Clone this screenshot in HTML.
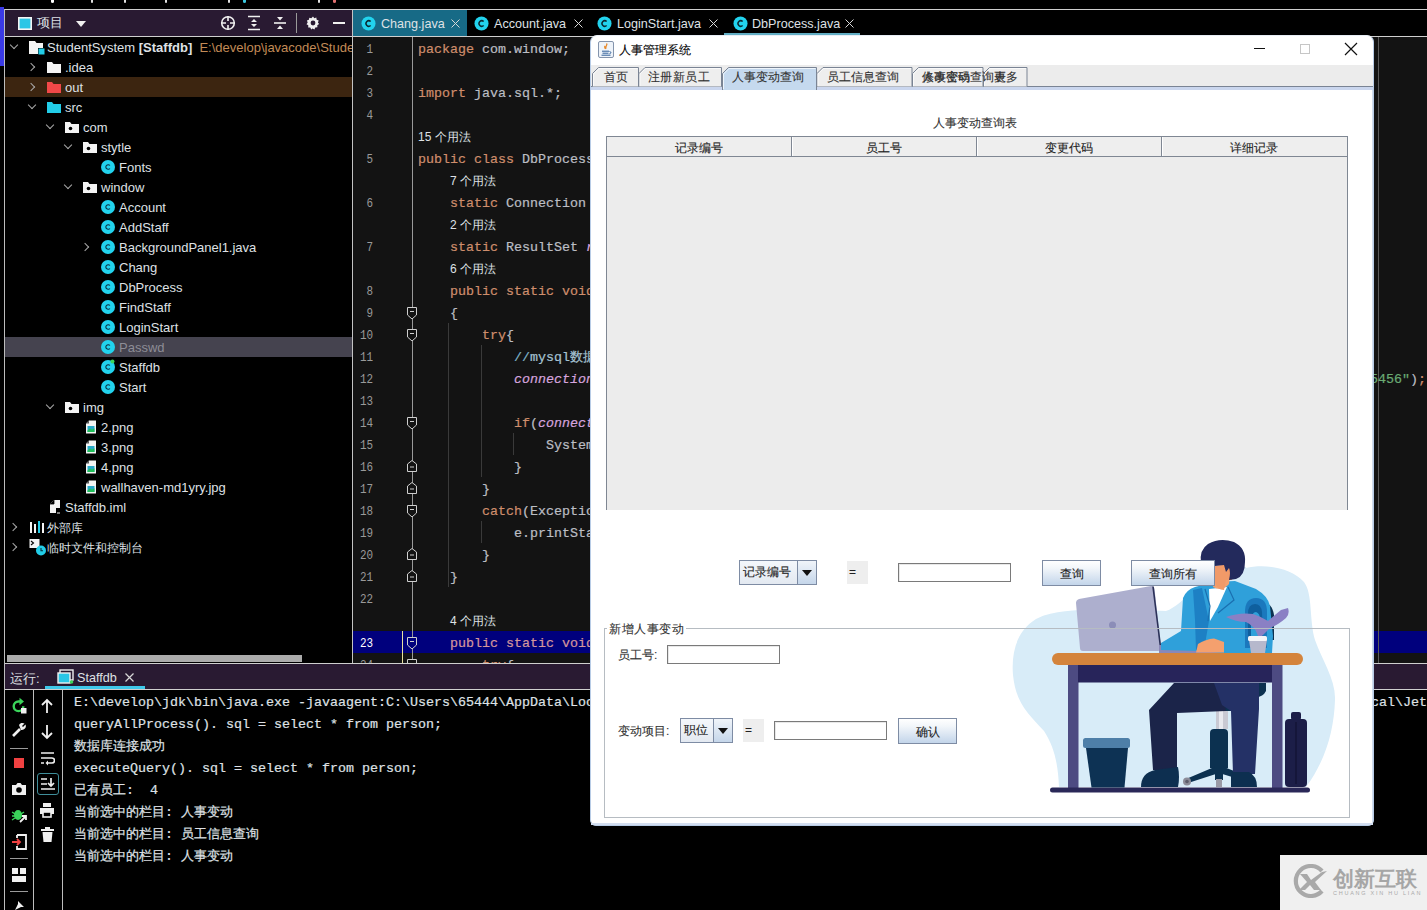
<!DOCTYPE html>
<html><head><meta charset="utf-8"><style>
*{box-sizing:border-box}
html,body{margin:0;padding:0}
body{width:1427px;height:910px;background:#000;position:relative;overflow:hidden;font-family:"Liberation Sans",sans-serif;font-size:13px;color:#dfe1e5}
.a{position:absolute}
.tr{position:absolute;height:20px;line-height:20px;white-space:nowrap;color:#dfe1e5;font-size:13px}
.chev{position:absolute;width:6px;height:6px;border-right:1.4px solid #a8a8a8;border-bottom:1.4px solid #a8a8a8}
.code{position:absolute;left:418px;white-space:pre;font-family:"Liberation Mono",monospace;font-size:13.33px;line-height:22px;height:22px;color:#bcbec4;padding-top:1.5px;-webkit-text-stroke:0.2px}
.num{position:absolute;width:40px;left:333px;text-align:right;font-family:"Liberation Mono",monospace;font-size:13.33px;line-height:22px;color:#8c8c8c;padding-top:1.5px;transform:scaleX(0.82);transform-origin:100% 50%}
.hint{position:absolute;white-space:pre;font-size:12px;line-height:22px;color:#dfe1e5;padding-top:1px}
.con{position:absolute;left:74px;white-space:pre;font-family:"Liberation Mono",monospace;font-size:13.33px;line-height:22px;color:#dfe1e5;-webkit-text-stroke:0.2px}
.st{position:absolute;white-space:nowrap;font-size:12px;line-height:16px;color:#333;-webkit-text-stroke:0.1px}
.tab{position:absolute;white-space:nowrap;font-size:12.6px;line-height:26px;top:11px;color:#dfe1e5}
</style></head><body>
<div class="a" style="left:51px;top:0;width:3px;height:3px;background:#ffffff;border-radius:0 0 2px 2px"></div><div class="a" style="left:91px;top:0;width:1.5px;height:3px;background:#e0e0e0;border-radius:0 0 2px 2px"></div><div class="a" style="left:124px;top:0;width:1.5px;height:3px;background:#e0e0e0;border-radius:0 0 2px 2px"></div><div class="a" style="left:165px;top:0;width:1.5px;height:3px;background:#e0e0e0;border-radius:0 0 2px 2px"></div><div class="a" style="left:228px;top:0;width:1.5px;height:3px;background:#e0e0e0;border-radius:0 0 2px 2px"></div><div class="a" style="left:243px;top:0;width:2.5px;height:3px;background:#3cc8e0;border-radius:0 0 2px 2px"></div><div class="a" style="left:318px;top:0;width:1.5px;height:3px;background:#e0e0e0;border-radius:0 0 2px 2px"></div><div class="a" style="left:333px;top:0;width:2.5px;height:3px;background:#e07070;border-radius:0 0 2px 2px"></div>
<div class="a" style="left:0;top:9px;width:1427px;height:1px;background:#cfcfcf"></div>
<div class="a" style="left:0;top:7px;width:4px;height:59px;background:#3a3ae6"></div>
<div class="a" style="left:4px;top:9px;width:1px;height:901px;background:#bdbdbd"></div>
<div class="a" style="left:5px;top:10px;width:347px;height:26px;background:#291a32"></div>
<div class="a" style="left:5px;top:36px;width:347px;height:1px;background:#cfcfcf"></div>
<svg class="a" style="left:18px;top:17px" width="14" height="13"><rect x="0.8" y="0.8" width="12.4" height="11.4" fill="#2bc6e6" stroke="#f4f4f4" stroke-width="1.6"/></svg>
<div class="tab" style="left:37px;top:10px;font-size:13px">项目</div>
<svg class="a" style="left:76px;top:21px" width="10" height="6"><path d="M0 0h10L5 6z" fill="#f0f0f0"/></svg>
<svg class="a" style="left:220px;top:15px" width="16" height="16" viewBox="0 0 16 16"><circle cx="8" cy="8" r="6.3" fill="none" stroke="#f0f0f0" stroke-width="1.6"/><path d="M8 1v5M8 10v5M1 8h5M10 8h5" stroke="#f0f0f0" stroke-width="1.6"/></svg>
<svg class="a" style="left:247px;top:15px" width="14" height="16" viewBox="0 0 14 16"><path d="M1 1.5h12M1 14.5h12" stroke="#f0f0f0" stroke-width="1.6"/><path d="M7 4l3 3H4z M7 12l3-3H4z" fill="#f0f0f0"/></svg>
<svg class="a" style="left:273px;top:15px" width="14" height="16" viewBox="0 0 14 16"><path d="M1 8h12" stroke="#f0f0f0" stroke-width="1.6"/><path d="M4 2h6L7 5.5z M4 14h6L7 10.5z" fill="#f0f0f0"/></svg>
<div class="a" style="left:296px;top:13px;width:1px;height:20px;background:#9a9a9a"></div>
<svg class="a" style="left:305px;top:15px" width="16" height="16" viewBox="0 0 16 16"><path d="M8 1.5l1.3 1.7 2-.6.4 2.1 2 .8-.8 2 1.2 1.6-1.8 1.1.1 2.1-2.1.2-.9 1.9-1.9-.9L6.2 14.5l-.9-1.9-2.1-.2.1-2.1L1.5 9.2l1.2-1.6-.8-2 2-.8.4-2.1 2 .6z" fill="#f0f0f0"/><circle cx="8" cy="8" r="2.4" fill="#291a32"/></svg>
<div class="a" style="left:333px;top:22px;width:12px;height:2px;background:#f0f0f0"></div>
<div class="a" style="left:5px;top:77px;width:347px;height:20px;background:#3c2510"></div>
<div class="a" style="left:5px;top:337px;width:347px;height:20px;background:#45434f"></div>
<div class="chev" style="left:11px;top:42px;transform:rotate(45deg)"></div>
<svg class="a" style="left:29px;top:39px" width="16" height="16" viewBox="0 0 16 16"><path d="M0 2h6l1.5 2H14v5H9v6H0z" fill="#f4f4f4"/><rect x="9.5" y="9.5" width="6" height="6" fill="#22cde8"/></svg>
<div class="tr" style="left:47px;top:38px"><span>StudentSystem</span> <b style="font-weight:bold">[Staffdb]</b>&nbsp; <span style="color:#c28b57">E:\develop\javacode\StudentSystem</span></div>
<div class="chev" style="left:28px;top:64px;transform:rotate(-45deg)"></div>
<svg class="a" style="left:46px;top:59px" width="16" height="16" viewBox="0 0 16 16"><path d="M1 3h5l1.5 2H15v9H1z" fill="#f4f4f4"/></svg>
<div class="tr" style="left:65px;top:58px">.idea</div>
<div class="chev" style="left:28px;top:84px;transform:rotate(-45deg)"></div>
<svg class="a" style="left:46px;top:79px" width="16" height="16" viewBox="0 0 16 16"><path d="M1 3h5l1.5 2H15v9H1z" fill="#f04848"/></svg>
<div class="tr" style="left:65px;top:78px">out</div>
<div class="chev" style="left:29px;top:102px;transform:rotate(45deg)"></div>
<svg class="a" style="left:46px;top:99px" width="16" height="16" viewBox="0 0 16 16"><path d="M1 3h5l1.5 2H15v9H1z" fill="#22cde8"/></svg>
<div class="tr" style="left:65px;top:98px">src</div>
<div class="chev" style="left:47px;top:122px;transform:rotate(45deg)"></div>
<svg class="a" style="left:64px;top:119px" width="16" height="16" viewBox="0 0 16 16"><path d="M1 3h5l1.5 2H15v9H1z" fill="#f4f4f4"/><circle cx="6.5" cy="9.5" r="1.8" fill="#000"/></svg>
<div class="tr" style="left:83px;top:118px">com</div>
<div class="chev" style="left:65px;top:142px;transform:rotate(45deg)"></div>
<svg class="a" style="left:82px;top:139px" width="16" height="16" viewBox="0 0 16 16"><path d="M1 3h5l1.5 2H15v9H1z" fill="#f4f4f4"/><circle cx="6.5" cy="9.5" r="1.8" fill="#000"/></svg>
<div class="tr" style="left:101px;top:138px">stytle</div>
<svg class="a" style="left:100px;top:159px" width="16" height="16" viewBox="0 0 16 16"><circle cx="8" cy="8" r="7" fill="#22d3ee"/><path d="M9.9 6.5 A2.3 2.3 0 1 0 9.9 9.5" fill="none" stroke="#0a3040" stroke-width="1.1"/></svg>
<div class="tr" style="left:119px;top:158px">Fonts</div>
<div class="chev" style="left:65px;top:182px;transform:rotate(45deg)"></div>
<svg class="a" style="left:82px;top:179px" width="16" height="16" viewBox="0 0 16 16"><path d="M1 3h5l1.5 2H15v9H1z" fill="#f4f4f4"/><circle cx="6.5" cy="9.5" r="1.8" fill="#000"/></svg>
<div class="tr" style="left:101px;top:178px">window</div>
<svg class="a" style="left:100px;top:199px" width="16" height="16" viewBox="0 0 16 16"><circle cx="8" cy="8" r="7" fill="#22d3ee"/><path d="M9.9 6.5 A2.3 2.3 0 1 0 9.9 9.5" fill="none" stroke="#0a3040" stroke-width="1.1"/></svg>
<div class="tr" style="left:119px;top:198px">Account</div>
<svg class="a" style="left:100px;top:219px" width="16" height="16" viewBox="0 0 16 16"><circle cx="8" cy="8" r="7" fill="#22d3ee"/><path d="M9.9 6.5 A2.3 2.3 0 1 0 9.9 9.5" fill="none" stroke="#0a3040" stroke-width="1.1"/></svg>
<div class="tr" style="left:119px;top:218px">AddStaff</div>
<div class="chev" style="left:82px;top:244px;transform:rotate(-45deg)"></div>
<svg class="a" style="left:100px;top:239px" width="16" height="16" viewBox="0 0 16 16"><circle cx="8" cy="8" r="7" fill="#22d3ee"/><path d="M9.9 6.5 A2.3 2.3 0 1 0 9.9 9.5" fill="none" stroke="#0a3040" stroke-width="1.1"/></svg>
<div class="tr" style="left:119px;top:238px">BackgroundPanel1.java</div>
<svg class="a" style="left:100px;top:259px" width="16" height="16" viewBox="0 0 16 16"><circle cx="8" cy="8" r="7" fill="#22d3ee"/><path d="M9.9 6.5 A2.3 2.3 0 1 0 9.9 9.5" fill="none" stroke="#0a3040" stroke-width="1.1"/></svg>
<div class="tr" style="left:119px;top:258px">Chang</div>
<svg class="a" style="left:100px;top:279px" width="16" height="16" viewBox="0 0 16 16"><circle cx="8" cy="8" r="7" fill="#22d3ee"/><path d="M9.9 6.5 A2.3 2.3 0 1 0 9.9 9.5" fill="none" stroke="#0a3040" stroke-width="1.1"/></svg>
<div class="tr" style="left:119px;top:278px">DbProcess</div>
<svg class="a" style="left:100px;top:299px" width="16" height="16" viewBox="0 0 16 16"><circle cx="8" cy="8" r="7" fill="#22d3ee"/><path d="M9.9 6.5 A2.3 2.3 0 1 0 9.9 9.5" fill="none" stroke="#0a3040" stroke-width="1.1"/></svg>
<div class="tr" style="left:119px;top:298px">FindStaff</div>
<svg class="a" style="left:100px;top:319px" width="16" height="16" viewBox="0 0 16 16"><circle cx="8" cy="8" r="7" fill="#22d3ee"/><path d="M9.9 6.5 A2.3 2.3 0 1 0 9.9 9.5" fill="none" stroke="#0a3040" stroke-width="1.1"/></svg>
<div class="tr" style="left:119px;top:318px">LoginStart</div>
<svg class="a" style="left:100px;top:339px" width="16" height="16" viewBox="0 0 16 16"><circle cx="8" cy="8" r="7" fill="#22d3ee"/><path d="M9.9 6.5 A2.3 2.3 0 1 0 9.9 9.5" fill="none" stroke="#0a3040" stroke-width="1.1"/></svg>
<div class="tr" style="left:119px;top:338px"><span style="color:#8d8d96">Passwd</span></div>
<svg class="a" style="left:100px;top:359px" width="16" height="16" viewBox="0 0 16 16"><circle cx="8" cy="8" r="7" fill="#22d3ee"/><path d="M9.9 6.5 A2.3 2.3 0 1 0 9.9 9.5" fill="none" stroke="#0a3040" stroke-width="1.1"/><circle cx="12.5" cy="2.5" r="2" fill="#3ad45a"/></svg>
<div class="tr" style="left:119px;top:358px">Staffdb</div>
<svg class="a" style="left:100px;top:379px" width="16" height="16" viewBox="0 0 16 16"><circle cx="8" cy="8" r="7" fill="#22d3ee"/><path d="M9.9 6.5 A2.3 2.3 0 1 0 9.9 9.5" fill="none" stroke="#0a3040" stroke-width="1.1"/></svg>
<div class="tr" style="left:119px;top:378px">Start</div>
<div class="chev" style="left:47px;top:402px;transform:rotate(45deg)"></div>
<svg class="a" style="left:64px;top:399px" width="16" height="16" viewBox="0 0 16 16"><path d="M1 3h5l1.5 2H15v9H1z" fill="#f4f4f4"/><circle cx="6.5" cy="9.5" r="1.8" fill="#000"/></svg>
<div class="tr" style="left:83px;top:398px">img</div>
<svg class="a" style="left:83px;top:419px" width="16" height="16" viewBox="0 0 16 16"><path d="M6 1.5h7v13H3V4.5z" fill="#f4f4f4"/><path d="M3 4.5h3v-3" fill="#555"/><rect x="4.5" y="7" width="7" height="6" fill="#2aa8c8"/><path d="M4.5 11.5l2.5-2 2 1.2 2.5-1.5v3.8h-7z" fill="#22c05a"/></svg>
<div class="tr" style="left:101px;top:418px">2.png</div>
<svg class="a" style="left:83px;top:439px" width="16" height="16" viewBox="0 0 16 16"><path d="M6 1.5h7v13H3V4.5z" fill="#f4f4f4"/><path d="M3 4.5h3v-3" fill="#555"/><rect x="4.5" y="7" width="7" height="6" fill="#2aa8c8"/><path d="M4.5 11.5l2.5-2 2 1.2 2.5-1.5v3.8h-7z" fill="#22c05a"/></svg>
<div class="tr" style="left:101px;top:438px">3.png</div>
<svg class="a" style="left:83px;top:459px" width="16" height="16" viewBox="0 0 16 16"><path d="M6 1.5h7v13H3V4.5z" fill="#f4f4f4"/><path d="M3 4.5h3v-3" fill="#555"/><rect x="4.5" y="7" width="7" height="6" fill="#2aa8c8"/><path d="M4.5 11.5l2.5-2 2 1.2 2.5-1.5v3.8h-7z" fill="#22c05a"/></svg>
<div class="tr" style="left:101px;top:458px">4.png</div>
<svg class="a" style="left:83px;top:479px" width="16" height="16" viewBox="0 0 16 16"><path d="M6 1.5h7v13H3V4.5z" fill="#f4f4f4"/><path d="M3 4.5h3v-3" fill="#555"/><rect x="4.5" y="7" width="7" height="6" fill="#2aa8c8"/><path d="M4.5 11.5l2.5-2 2 1.2 2.5-1.5v3.8h-7z" fill="#22c05a"/></svg>
<div class="tr" style="left:101px;top:478px">wallhaven-md1yry.jpg</div>
<svg class="a" style="left:47px;top:499px" width="16" height="16" viewBox="0 0 16 16"><path d="M7 1h6v13H3V5z" fill="#f4f4f4"/><path d="M3 5h4V1" fill="#000" stroke="#000" stroke-width="0.8"/><rect x="9" y="9" width="4" height="5" fill="#000"/><rect x="10" y="13.5" width="3" height="1" fill="#f4f4f4"/></svg>
<div class="tr" style="left:65px;top:498px">Staffdb.iml</div>
<div class="chev" style="left:10px;top:524px;transform:rotate(-45deg)"></div>
<svg class="a" style="left:29px;top:519px" width="16" height="16" viewBox="0 0 16 16"><rect x="1" y="3" width="2" height="11" fill="#f4f4f4"/><rect x="5" y="5" width="2" height="9" fill="#f4f4f4"/><rect x="9" y="2" width="2" height="12" fill="#22cde8"/><rect x="13" y="4" width="2" height="10" fill="#f4f4f4"/></svg>
<div class="tr" style="left:47px;top:518px"><span style="font-size:12px">外部库</span></div>
<div class="chev" style="left:10px;top:544px;transform:rotate(-45deg)"></div>
<svg class="a" style="left:29px;top:538px" width="18" height="18" viewBox="0 0 18 18"><path d="M0.5 1h10v9h-10z" fill="#f4f4f4"/><path d="M2 3l2.5 2-2.5 2" stroke="#000" fill="none" stroke-width="1.1"/><circle cx="12" cy="12.5" r="5" fill="#22cde8"/><path d="M12 10v2.8h2" stroke="#05303a" fill="none" stroke-width="1.1"/></svg>
<div class="tr" style="left:47px;top:538px"><span style="font-size:12px">临时文件和控制台</span></div>
<div class="a" style="left:7px;top:655px;width:295px;height:7px;background:#ababab"></div>
<div class="a" style="left:352px;top:10px;width:1px;height:653px;background:#c4c4c4"></div>
<div class="a" style="left:353px;top:37px;width:1074px;height:626px;background:#131313"></div>
<div class="a" style="left:353px;top:631px;width:1074px;height:22px;background:#00007d"></div>
<div class="a" style="left:412px;top:37px;width:1px;height:626px;background:#9a9a9a"></div>
<div class="a" style="left:402px;top:631px;width:1px;height:32px;background:#e8e0a0"></div>
<div class="a" style="left:1378px;top:37px;width:1px;height:626px;background:#5a5a5a"></div>
<div class="a" style="left:448px;top:323px;width:1px;height:264px;background:#3a3a3a"></div>
<div class="a" style="left:481px;top:345px;width:1px;height:132px;background:#3a3a3a"></div>
<div class="a" style="left:481px;top:521px;width:1px;height:22px;background:#3a3a3a"></div>
<div class="a" style="left:513px;top:433px;width:1px;height:22px;background:#3a3a3a"></div>
<svg class="a" style="left:407px;top:307px" width="10" height="12" viewBox="0 0 10 12"><path d="M0.5 0.5h9v7.5l-4.5 4L0.5 8z" fill="#131313" stroke="#cfcfcf" stroke-width="1"/><path d="M3 4.5h4" stroke="#cfcfcf" stroke-width="1"/></svg>
<svg class="a" style="left:407px;top:329px" width="10" height="12" viewBox="0 0 10 12"><path d="M0.5 0.5h9v7.5l-4.5 4L0.5 8z" fill="#131313" stroke="#cfcfcf" stroke-width="1"/><path d="M3 4.5h4" stroke="#cfcfcf" stroke-width="1"/></svg>
<svg class="a" style="left:407px;top:417px" width="10" height="12" viewBox="0 0 10 12"><path d="M0.5 0.5h9v7.5l-4.5 4L0.5 8z" fill="#131313" stroke="#cfcfcf" stroke-width="1"/><path d="M3 4.5h4" stroke="#cfcfcf" stroke-width="1"/></svg>
<svg class="a" style="left:407px;top:460px" width="10" height="12" viewBox="0 0 10 12"><path d="M0.5 11.5h9v-7.5l-4.5-3.5L0.5 4z" fill="#131313" stroke="#cfcfcf" stroke-width="1"/><path d="M3 7h4" stroke="#cfcfcf" stroke-width="1"/></svg>
<svg class="a" style="left:407px;top:482px" width="10" height="12" viewBox="0 0 10 12"><path d="M0.5 11.5h9v-7.5l-4.5-3.5L0.5 4z" fill="#131313" stroke="#cfcfcf" stroke-width="1"/><path d="M3 7h4" stroke="#cfcfcf" stroke-width="1"/></svg>
<svg class="a" style="left:407px;top:505px" width="10" height="12" viewBox="0 0 10 12"><path d="M0.5 0.5h9v7.5l-4.5 4L0.5 8z" fill="#131313" stroke="#cfcfcf" stroke-width="1"/><path d="M3 4.5h4" stroke="#cfcfcf" stroke-width="1"/></svg>
<svg class="a" style="left:407px;top:548px" width="10" height="12" viewBox="0 0 10 12"><path d="M0.5 11.5h9v-7.5l-4.5-3.5L0.5 4z" fill="#131313" stroke="#cfcfcf" stroke-width="1"/><path d="M3 7h4" stroke="#cfcfcf" stroke-width="1"/></svg>
<svg class="a" style="left:407px;top:570px" width="10" height="12" viewBox="0 0 10 12"><path d="M0.5 11.5h9v-7.5l-4.5-3.5L0.5 4z" fill="#131313" stroke="#cfcfcf" stroke-width="1"/><path d="M3 7h4" stroke="#cfcfcf" stroke-width="1"/></svg>
<svg class="a" style="left:407px;top:637px" width="10" height="12" viewBox="0 0 10 12"><path d="M0.5 0.5h9v7.5l-4.5 4L0.5 8z" fill="#00007d" stroke="#cfcfcf" stroke-width="1"/><path d="M3 4.5h4" stroke="#cfcfcf" stroke-width="1"/></svg>
<svg class="a" style="left:407px;top:659px" width="10" height="12" viewBox="0 0 10 12"><path d="M0.5 0.5h9v7.5l-4.5 4L0.5 8z" fill="#131313" stroke="#cfcfcf" stroke-width="1"/><path d="M3 4.5h4" stroke="#cfcfcf" stroke-width="1"/></svg>
<div class="num" style="top:37px;color:#9a9a9a">1</div>
<div class="code" style="top:37px"><span style="color:#cf8e6d">package</span><span style="color:#bcbec4"> com.window;</span></div>
<div class="num" style="top:59px;color:#9a9a9a">2</div>
<div class="num" style="top:81px;color:#9a9a9a">3</div>
<div class="code" style="top:81px"><span style="color:#cf8e6d">import</span><span style="color:#bcbec4"> java.sql.*;</span></div>
<div class="num" style="top:103px;color:#9a9a9a">4</div>
<div class="hint" style="left:418px;top:125px">15 个用法</div>
<div class="num" style="top:147px;color:#9a9a9a">5</div>
<div class="code" style="top:147px"><span style="color:#cf8e6d">public</span><span style="color:#bcbec4"> </span><span style="color:#cf8e6d">class</span><span style="color:#bcbec4"> DbProcess {</span></div>
<div class="hint" style="left:450px;top:169px">7 个用法</div>
<div class="num" style="top:191px;color:#9a9a9a">6</div>
<div class="code" style="top:191px"><span style="color:#cf8e6d">    static</span><span style="color:#bcbec4"> Connection connection;</span></div>
<div class="hint" style="left:450px;top:213px">2 个用法</div>
<div class="num" style="top:235px;color:#9a9a9a">7</div>
<div class="code" style="top:235px"><span style="color:#cf8e6d">    static</span><span style="color:#bcbec4"> ResultSet </span><span style="color:#d6a4de;font-style:italic">rs</span></div>
<div class="hint" style="left:450px;top:257px">6 个用法</div>
<div class="num" style="top:279px;color:#9a9a9a">8</div>
<div class="code" style="top:279px"><span style="color:#cf8e6d">    public static void</span><span style="color:#bcbec4"> connect()</span></div>
<div class="num" style="top:301px;color:#9a9a9a">9</div>
<div class="code" style="top:301px"><span style="color:#bcbec4">    {</span></div>
<div class="num" style="top:323px;color:#9a9a9a">10</div>
<div class="code" style="top:323px"><span style="color:#cf8e6d">        try</span><span style="color:#bcbec4">{</span></div>
<div class="num" style="top:345px;color:#9a9a9a">11</div>
<div class="code" style="top:345px"><span style="color:#7fb3c9">            //</span><span style="color:#a6c3d3">mysql数据库</span></div>
<div class="num" style="top:367px;color:#9a9a9a">12</div>
<div class="code" style="top:367px"><span style="color:#d6a4de;font-style:italic">            connection</span><span style="color:#bcbec4"> = DriverManager.getConnection(</span></div>
<div class="num" style="top:389px;color:#9a9a9a">13</div>
<div class="num" style="top:411px;color:#9a9a9a">14</div>
<div class="code" style="top:411px"><span style="color:#cf8e6d">            if</span><span style="color:#bcbec4">(</span><span style="color:#d6a4de;font-style:italic">connection</span></div>
<div class="num" style="top:433px;color:#9a9a9a">15</div>
<div class="code" style="top:433px"><span style="color:#bcbec4">                System.out.println</span></div>
<div class="num" style="top:455px;color:#9a9a9a">16</div>
<div class="code" style="top:455px"><span style="color:#bcbec4">            }</span></div>
<div class="num" style="top:477px;color:#9a9a9a">17</div>
<div class="code" style="top:477px"><span style="color:#bcbec4">        }</span></div>
<div class="num" style="top:499px;color:#9a9a9a">18</div>
<div class="code" style="top:499px"><span style="color:#cf8e6d">        catch</span><span style="color:#bcbec4">(Exception e)</span></div>
<div class="num" style="top:521px;color:#9a9a9a">19</div>
<div class="code" style="top:521px"><span style="color:#bcbec4">            e.printStackTrace();</span></div>
<div class="num" style="top:543px;color:#9a9a9a">20</div>
<div class="code" style="top:543px"><span style="color:#bcbec4">        }</span></div>
<div class="num" style="top:565px;color:#9a9a9a">21</div>
<div class="code" style="top:565px"><span style="color:#bcbec4">    }</span></div>
<div class="num" style="top:587px;color:#9a9a9a">22</div>
<div class="hint" style="left:450px;top:609px">4 个用法</div>
<div class="num" style="top:631px;color:#ffffff">23</div>
<div class="code" style="top:631px"><span style="color:#d4979c">    public static void</span><span style="color:#bcbec4"> query</span></div>
<div class="num" style="top:653px;color:#9a9a9a">24</div>
<div class="code" style="top:653px"><span style="color:#cf8e6d">        try</span><span style="color:#bcbec4">{</span></div>
<div class="code" style="left:1362px;top:367px"><span style="color:#6aab73">"5456"</span><span style="color:#bcbec4">)</span><span style="color:#cf8e6d">;</span></div>
<div class="a" style="left:353px;top:10px;width:1074px;height:26px;background:#000"></div>
<div class="a" style="left:353px;top:10px;width:114px;height:26px;background:#176a86"></div>
<div class="a" style="left:353px;top:36px;width:1074px;height:1px;background:#cfcfcf"></div>
<div class="a" style="left:724px;top:33px;width:136px;height:2px;background:#62aec4"></div>
<svg class="a" style="left:361px;top:15.5px" width="15" height="15" viewBox="0 0 16 16"><circle cx="8" cy="8" r="7.5" fill="#22d3ee"/><path d="M10.3 5.9 A2.9 2.9 0 1 0 10.3 10.1" fill="none" stroke="#0a2a33" stroke-width="1.6"/></svg><div class="tab" style="left:381px">Chang.java</div><svg class="a" style="left:451px;top:19px" width="9" height="9"><path d="M0.5 0.5L8.5 8.5M8.5 0.5L0.5 8.5" stroke="#d8d8d8" stroke-width="1"/></svg>
<svg class="a" style="left:474px;top:15.5px" width="15" height="15" viewBox="0 0 16 16"><circle cx="8" cy="8" r="7.5" fill="#22d3ee"/><path d="M10.3 5.9 A2.9 2.9 0 1 0 10.3 10.1" fill="none" stroke="#0a2a33" stroke-width="1.6"/></svg><div class="tab" style="left:494px">Account.java</div><svg class="a" style="left:574px;top:19px" width="9" height="9"><path d="M0.5 0.5L8.5 8.5M8.5 0.5L0.5 8.5" stroke="#d8d8d8" stroke-width="1"/></svg>
<svg class="a" style="left:597px;top:15.5px" width="15" height="15" viewBox="0 0 16 16"><circle cx="8" cy="8" r="7.5" fill="#22d3ee"/><path d="M10.3 5.9 A2.9 2.9 0 1 0 10.3 10.1" fill="none" stroke="#0a2a33" stroke-width="1.6"/></svg><div class="tab" style="left:617px">LoginStart.java</div><svg class="a" style="left:709px;top:19px" width="9" height="9"><path d="M0.5 0.5L8.5 8.5M8.5 0.5L0.5 8.5" stroke="#d8d8d8" stroke-width="1"/></svg>
<svg class="a" style="left:733px;top:15.5px" width="15" height="15" viewBox="0 0 16 16"><circle cx="8" cy="8" r="7.5" fill="#22d3ee"/><path d="M10.3 5.9 A2.9 2.9 0 1 0 10.3 10.1" fill="none" stroke="#0a2a33" stroke-width="1.6"/></svg><div class="tab" style="left:752px">DbProcess.java</div><svg class="a" style="left:845px;top:19px" width="9" height="9"><path d="M0.5 0.5L8.5 8.5M8.5 0.5L0.5 8.5" stroke="#d8d8d8" stroke-width="1"/></svg>
<div class="a" style="left:5px;top:663px;width:1422px;height:1px;background:#cfcfcf"></div>
<div class="a" style="left:5px;top:664px;width:1422px;height:25px;background:#291a32"></div>
<div class="a" style="left:45px;top:686px;width:100px;height:3px;background:#3ec9ea"></div>
<div class="a" style="left:5px;top:689px;width:1422px;height:1px;background:#cfcfcf"></div>
<div class="a" style="left:33px;top:690px;width:1px;height:220px;background:#bdbdbd"></div>
<div class="a" style="left:62px;top:690px;width:1px;height:220px;background:#bdbdbd"></div>
<div class="tab" style="left:10px;top:666px;line-height:25px;font-size:13px">运行:</div>
<svg class="a" style="left:57px;top:669px" width="17" height="15" viewBox="0 0 17 15"><rect x="3" y="1" width="13" height="10" fill="none" stroke="#f0f0f0" stroke-width="1.4"/><rect x="1" y="4" width="12" height="10" fill="#2bc6e6" stroke="#f0f0f0" stroke-width="1.4"/><circle cx="14.5" cy="13" r="1.8" fill="#3ad45a"/></svg>
<div class="tab" style="left:77px;top:666px;line-height:25px">Staffdb</div>
<svg class="a" style="left:125px;top:673px" width="9" height="9"><path d="M0.5 0.5L8.5 8.5M8.5 0.5L0.5 8.5" stroke="#d8d8d8" stroke-width="1.2"/></svg>
<svg class="a" style="left:11px;top:697px" width="16" height="17" viewBox="0 0 16 17"><path d="M9 4.5H7.5A4.8 4.8 0 1 0 12.3 9.3" fill="none" stroke="#3ad45a" stroke-width="2.4"/><path d="M8.5 0.8L13 4.5L8.5 8.2z" fill="#3ad45a"/><rect x="10" y="11" width="5.5" height="5.5" fill="#f0f0f0"/></svg>
<svg class="a" style="left:11px;top:722px" width="16" height="16" viewBox="0 0 16 16"><path d="M2 14L9 7" stroke="#f0f0f0" stroke-width="2.6"/><path d="M8 3a4 4 0 0 1 5.5-1.5L11 4l1 1 2.5-2.5A4 4 0 0 1 10 8z" fill="#f0f0f0"/></svg>
<div class="a" style="left:10px;top:748px;width:18px;height:1px;background:#9a9a9a"></div>
<div class="a" style="left:14px;top:758px;width:10px;height:10px;background:#f04141"></div>
<svg class="a" style="left:11px;top:782px" width="16" height="14" viewBox="0 0 16 14"><path d="M1 3h4l1.5-2h3L11 3h4v10H1z" fill="#f0f0f0"/><circle cx="8" cy="8" r="2.8" fill="#000"/></svg>
<svg class="a" style="left:11px;top:807px" width="17" height="17" viewBox="0 0 17 17"><ellipse cx="7" cy="8" rx="4" ry="5" fill="#3ad45a"/><path d="M1 5l3 2M1 9h3M1 13l3-2M13 5l-3 2M13 9h-3" stroke="#3ad45a" stroke-width="1.4"/><path d="M9 15l6-6M11 9h4v4" stroke="#f0f0f0" stroke-width="1.8" fill="none"/></svg>
<svg class="a" style="left:11px;top:834px" width="16" height="16" viewBox="0 0 16 16"><path d="M6 1h9v14H6v-3M6 4V1" fill="none" stroke="#f0f0f0" stroke-width="1.8"/><path d="M1 8h8M6 5l3 3-3 3" fill="none" stroke="#f04141" stroke-width="1.8"/></svg>
<div class="a" style="left:10px;top:858px;width:18px;height:1px;background:#9a9a9a"></div>
<svg class="a" style="left:12px;top:868px" width="14" height="14" viewBox="0 0 14 14"><rect x="0" y="0" width="6" height="6" fill="#f0f0f0"/><rect x="8" y="0" width="6" height="6" fill="#f0f0f0"/><rect x="0" y="8" width="14" height="6" fill="#f0f0f0"/></svg>
<div class="a" style="left:10px;top:891px;width:18px;height:1px;background:#9a9a9a"></div>
<svg class="a" style="left:12px;top:899px" width="14" height="11" viewBox="0 0 14 11"><path d="M6 2l6 6-3 0-6 3 3-6z" fill="#f0f0f0"/></svg>
<svg class="a" style="left:40px;top:698px" width="14" height="16" viewBox="0 0 14 16"><path d="M7 15V2M2 7l5-5 5 5" fill="none" stroke="#f0f0f0" stroke-width="1.8"/></svg>
<svg class="a" style="left:40px;top:724px" width="14" height="16" viewBox="0 0 14 16"><path d="M7 1v13M2 9l5 5 5-5" fill="none" stroke="#f0f0f0" stroke-width="1.8"/></svg>
<svg class="a" style="left:40px;top:751px" width="15" height="15" viewBox="0 0 15 15"><path d="M1 2h13M1 7h11a2.5 2.5 0 0 1 0 5H7M1 12h3" fill="none" stroke="#f0f0f0" stroke-width="1.7"/><path d="M8 9.5l-2.5 2.5 2.5 2.5z" fill="#f0f0f0"/></svg>
<div class="a" style="left:37px;top:773px;width:22px;height:22px;border:1px solid #3f8e9a;border-radius:3px"></div>
<svg class="a" style="left:40px;top:776px" width="16" height="16" viewBox="0 0 16 16"><path d="M1 3h6M1 8h6M1 13h14M11 2v8M8 7l3 3 3-3" fill="none" stroke="#f0f0f0" stroke-width="1.7"/></svg>
<svg class="a" style="left:39px;top:802px" width="16" height="16" viewBox="0 0 16 16"><rect x="4" y="1" width="8" height="4" fill="#f0f0f0"/><rect x="1" y="6" width="14" height="6" fill="#f0f0f0"/><rect x="4" y="10" width="8" height="5" fill="#000" stroke="#f0f0f0" stroke-width="1.6"/></svg>
<svg class="a" style="left:41px;top:827px" width="13" height="15" viewBox="0 0 13 15"><rect x="0" y="2" width="13" height="2" fill="#f0f0f0"/><rect x="4" y="0" width="5" height="2" fill="#f0f0f0"/><path d="M1.5 5h10l-1 10h-8z" fill="#f0f0f0"/></svg>
<div class="con" style="top:692px">E:\develop\jdk\bin\java.exe -javaagent:C:\Users\65444\AppData\Local\Programs\IntelliJ IDEA Ultimate\lib\idea_rt.jar=5</div>
<div class="con" style="top:714px">queryAllProcess(). sql = select * from person;</div>
<div class="con" style="top:736px">数据库连接成功</div>
<div class="con" style="top:758px">executeQuery(). sql = select * from person;</div>
<div class="con" style="top:780px">已有员工:  4</div>
<div class="con" style="top:802px">当前选中的栏目: 人事变动</div>
<div class="con" style="top:824px">当前选中的栏目: 员工信息查询</div>
<div class="con" style="top:846px">当前选中的栏目: 人事变动</div>
<div class="con" style="left:1371px;top:692px">cal\JetBrains</div>
<div class="a" style="left:590px;top:35px;width:784px;height:791px;background:#fff;border:1px solid #b8cce6;border-top-color:#e8eef6;border-radius:7px 7px 6px 6px"></div>
<div class="a" style="left:1372px;top:90px;width:1px;height:733px;background:#d0dcec"></div>
<div class="a" style="left:591px;top:823px;width:782px;height:2px;background:#d3def0"></div>
<svg class="a" style="left:598px;top:41px" width="16" height="17" viewBox="0 0 16 17"><rect x="0.5" y="0.5" width="15" height="16" rx="1.5" fill="#eef3f9" stroke="#8494ac"/><path d="M8.5 2.5c1.8 1.6-2.2 2.8-0.3 5.2M7 5c-1 1.2 0.4 2 0.2 3" stroke="#e8892a" stroke-width="1.3" fill="none"/><path d="M4 10.2h7M4.5 12.2h6M3.5 14.2h9" stroke="#2f5f98" stroke-width="1"/><path d="M11.5 10.5c1.8 0 1.8 2.2 0 2.2" stroke="#2f5f98" fill="none" stroke-width="1"/></svg>
<div class="st" style="left:619px;top:42px;color:#000;font-size:12px">人事管理系统</div>
<div class="a" style="left:1254px;top:48px;width:11px;height:1px;background:#111"></div>
<div class="a" style="left:1300px;top:44px;width:10px;height:10px;border:1px solid #c6c6c6"></div>
<svg class="a" style="left:1344px;top:42px" width="14" height="14"><path d="M1 1L13 13M13 1L1 13" stroke="#111" stroke-width="1.2"/></svg>
<svg class="a" style="left:590px;top:60px" width="784" height="32" viewBox="590 60 784 32">
<rect x="591" y="65" width="782" height="21" fill="#ececec"/>
<rect x="591" y="86" width="782" height="1" fill="#7a8494"/>
<rect x="591" y="87" width="782" height="3" fill="#cad6ee"/>
<path d="M592.5 86.5 V73.5 L598.5 67.5 H638.5 V86.5" fill="#eeeeee" stroke="#7a8494" stroke-width="1"/>
<path d="M593.5 86 V74 L599 68.5 H637.5" fill="none" stroke="#fafafa" stroke-width="1"/>
<path d="M639.0 86.5 V73.5 L645.0 67.5 H721.5 V86.5" fill="#eeeeee" stroke="#7a8494" stroke-width="1"/>
<path d="M640.0 86 V74 L645.5 68.5 H720.5" fill="none" stroke="#fafafa" stroke-width="1"/>
<path d="M722.5 90 V73.5 L728.5 67.5 H816.5 V90" fill="#c5d9ee" stroke="#7a8494" stroke-width="1"/>
<path d="M723.5 89 V74 L729 68.5 H815.5" fill="none" stroke="#eef5fc" stroke-width="1"/>
<path d="M817.0 86.5 V73.5 L823.0 67.5 H912 V86.5" fill="#eeeeee" stroke="#7a8494" stroke-width="1"/>
<path d="M818.0 86 V74 L823.5 68.5 H911" fill="none" stroke="#fafafa" stroke-width="1"/>
<path d="M912.5 86.5 V73.5 L918.5 67.5 H983 V86.5" fill="#eeeeee" stroke="#7a8494" stroke-width="1"/>
<path d="M913.5 86 V74 L919 68.5 H982" fill="none" stroke="#fafafa" stroke-width="1"/>
<path d="M983.5 86.5 V73.5 L989.5 67.5 H1027 V86.5" fill="#eeeeee" stroke="#7a8494" stroke-width="1"/>
<path d="M984.5 86 V74 L990 68.5 H1026" fill="none" stroke="#fafafa" stroke-width="1"/>
</svg>
<div class="st" style="left:604px;top:69px;letter-spacing:0">首页</div>
<div class="st" style="left:648px;top:69px;letter-spacing:0.4px">注册新员工</div>
<div class="st" style="left:732px;top:69px;letter-spacing:0">人事变动查询</div>
<div class="st" style="left:827px;top:69px;letter-spacing:0">员工信息查询</div>
<div class="st" style="left:922px;top:69px;letter-spacing:0">修改密码</div>
<div class="st" style="left:922px;top:69px;letter-spacing:0">人事变动查询表</div>
<div class="st" style="left:994px;top:69px;letter-spacing:0">更多</div>
<div class="st" style="left:933px;top:115px;color:#333">人事变动查询表</div>
<div class="a" style="left:606px;top:136px;width:742px;height:374px;background:#ececec;border-left:1px solid #7f8793;border-right:1px solid #7f8793"></div>
<div class="a" style="left:606px;top:136px;width:742px;height:21px;background:#eeeeee;border:1px solid #7f8793"></div>
<div class="a" style="left:791px;top:137px;width:1px;height:19px;background:#7f8793"></div>
<div class="a" style="left:792px;top:137px;width:1px;height:19px;background:#ffffff"></div>
<div class="a" style="left:976px;top:137px;width:1px;height:19px;background:#7f8793"></div>
<div class="a" style="left:977px;top:137px;width:1px;height:19px;background:#ffffff"></div>
<div class="a" style="left:1161px;top:137px;width:1px;height:19px;background:#7f8793"></div>
<div class="a" style="left:1162px;top:137px;width:1px;height:19px;background:#ffffff"></div>
<div class="st" style="left:639px;width:120px;text-align:center;top:140px;color:#222">记录编号</div>
<div class="st" style="left:824px;width:120px;text-align:center;top:140px;color:#222">员工号</div>
<div class="st" style="left:1009px;width:120px;text-align:center;top:140px;color:#222">变更代码</div>
<div class="st" style="left:1194px;width:120px;text-align:center;top:140px;color:#222">详细记录</div>
<svg class="a" style="left:1000px;top:530px" width="350" height="270" viewBox="1000 530 350 270">
<path d="M1246 568 C1262 564 1290 566 1304 582 C1313 594 1309 620 1315 640 C1322 660 1336 680 1335 700 C1334 730 1326 760 1306 787 L1059 787 C1058 765 1055 748 1044 731 C1030 715 1016 705 1013 675 C1011 650 1018 630 1036 619 C1055 609 1075 612 1095 608 L1166 611 C1175 608 1182 600 1195 590 C1212 578 1228 570 1246 567 Z" fill="#d8ecf8"/>
<path d="M1260 603 q12 -2 14 12 v25 h-14z" fill="#0c3150"/>
<path d="M1252 683 h14 v8 q-3 6 -10 6 h-4z" fill="#0c3150"/>
<rect x="1175" y="702" width="80" height="9" fill="#0c3150"/>
<rect x="1216" y="711" width="12" height="18" fill="#c9c9d3"/>
<rect x="1219" y="711" width="4" height="18" fill="#e9e9ef"/>
<path d="M1210 733 q0 -4 4 -4 h10 q4 0 4 4 v35 h-18z" fill="#0c3150"/>
<path d="M1219 765 L1186 779 L1188 783 L1219 773 L1252 783 L1254 779 Z" fill="#0c3150"/>
<rect x="1215" y="765" width="8" height="15" fill="#0c3150"/>
<circle cx="1187" cy="781.5" r="4" fill="#8c8c98"/><circle cx="1187" cy="781.5" r="1.8" fill="#5c5c6a"/>
<rect x="1216" y="779" width="6" height="8" fill="#9a9aa6"/>
<path d="M1174 683 L1221 683 L1226 711 L1177 713 L1177 770 L1153 770 L1149 710 Z" fill="#1b2449"/>
<path d="M1141 787 q0 -14 14 -17 l23 -3 q2 10 0 20 z" fill="#0d2f50"/>
<path d="M1214 683 L1259 683 L1259 709 L1255 774 L1233 774 L1231 711 L1222 705 Z" fill="#243166"/>
<path d="M1231 787 v-15 h18 q8 4 8 15 z" fill="#0d2f50"/>
<rect x="1068" y="664" width="10.5" height="124" fill="#4d4b82"/>
<rect x="1272" y="664" width="10.5" height="124" fill="#4d4b82"/>
<rect x="1078" y="664" width="194" height="18.5" fill="#27245a"/>
<rect x="1052" y="653" width="251" height="12" rx="6" fill="#d4843c"/>
<rect x="1050" y="787.5" width="260" height="5" rx="2.5" fill="#2a2858"/>
<path d="M1086 748 L1128 748 L1124.5 787.5 L1091.5 787.5 Z" fill="#0d3254"/>
<rect x="1083" y="738" width="47" height="10" rx="2.5" fill="#4e7fa8"/>
<rect x="1291" y="712" width="10" height="8" rx="2" fill="#1c1e48"/>
<rect x="1285" y="719" width="22" height="68" rx="4" fill="#1c1e48"/>
<rect x="1295.5" y="722" width="1" height="62" fill="#0e0f2c"/>
<path d="M1079 599 L1151 586 Q1154 585.5 1154.5 589 L1161 648 Q1161 651 1158 651 L1083 651 Q1080 651 1080 648 L1076 603 Q1076 600 1079 599Z" fill="#adafce"/>
<path d="M1153 586.5 L1161 651" stroke="#2b3158" stroke-width="1.6"/>
<circle cx="1112.5" cy="625" r="3.5" fill="#8b8db8"/>
<path d="M1159 645 L1224 647 L1224 653 L1159 653 Z" fill="#8a88b8"/>
<path d="M1161 643 L1181 631 L1183 598 Q1186 590 1195 587 L1214 582 L1235 581 L1256 589 Q1268 596 1270 606 L1273 636 L1272 653 L1223 653 L1200 651 L1161 650 Z" fill="#2fa0da"/>
<path d="M1193 590 L1202 588 L1209 621 L1204 650 L1196 650 L1195 620 Z" fill="#1d80c4"/>
<path d="M1245 648 V612 Q1245 598 1256 598 Q1267 598 1267 612 V648 Z" fill="#1b78bd"/>
<path d="M1248 640 V614 Q1248 604 1255 604 Q1261 604 1262 612 L1263 640 Z" fill="#0f5f9e"/>
<path d="M1251 648 V620 Q1252 612 1256 612 Q1260 613 1260 620 V648 Z" fill="#2fa0da"/>
<path d="M1209 589 L1227 587 L1218 607 L1210 621 Z" fill="#ffffff"/>
<path d="M1205 589 L1210 606 L1208 621" stroke="#1a6fb0" stroke-width="1.2" fill="none"/>
<path d="M1228 587 L1234 600 L1218 613" stroke="#1a6fb0" stroke-width="1.2" fill="none"/>
<path d="M1214 566 L1231 566 L1229 584 Q1222 592 1213 587 Z" fill="#f4a06e"/>
<path d="M1213 566 L1231 564 L1232 580 L1226 580 L1224 590 Q1217 590 1215 582Z" fill="#f19a68"/>
<path d="M1201 563 Q1199 550 1208 544 Q1220 537 1234 542 Q1246 548 1245 562 Q1245 576 1236 579 L1229 580 Q1231 572 1229 568 L1226 572 L1224 565 L1215 566 Q1205 568 1201 563Z" fill="#232a5c"/>
<path d="M1196 652.6 L1198 644 Q1206 639 1214 638.5 L1224 642 L1224 652.6 Z" fill="#f4a06e"/>
<path d="M1226 617 Q1240 612 1253 614 Q1262 617 1268 621 Q1276 614 1281 610 L1288 608 Q1290 614 1286 618 Q1278 625 1270 628 Q1266 632 1262 636 L1258 636 Q1255 626 1246 622 Q1236 622 1226 617Z" fill="#8a80c4"/>
<path d="M1249 640 h18 l-2 13 h-14z" fill="#b6b8cc"/>
<rect x="1248" y="636" width="19" height="5" rx="1.5" fill="#f4f4f8"/>
</svg>
<div class="a" style="left:739px;top:560px;width:78px;height:25px;border:1px solid #7e8ca4;background:linear-gradient(#f4f7fb,#e3e9f1)"></div><div class="a" style="left:797px;top:561px;width:19px;height:23px;border-left:1px solid #7e8ca4;background:linear-gradient(#f0f4f9,#c5d6ea)"></div><svg class="a" style="left:802.0px;top:569.5px" width="10" height="6"><path d="M0 0h10L5 6z" fill="#111"/></svg><div class="st" style="left:743px;top:560px;height:25px;line-height:25px;color:#222">记录编号</div>
<div class="a" style="left:847px;top:561px;width:21px;height:23px;background:#eeeeee"></div><div class="st" style="left:849px;top:561px;height:23px;line-height:23px;color:#222">=</div>
<div class="a" style="left:898px;top:563px;width:113px;height:19px;border:1px solid #7a7a7a;background:#fff;box-shadow:inset 1px 1px 0 #e8e8e8"></div>
<div class="a" style="left:1042px;top:560px;width:59px;height:26px;border:1px solid #7e8ca4;background:linear-gradient(#ffffff,#f2f6fa 30%,#c3d5ea);"></div><div class="st" style="left:1042px;top:561px;width:59px;height:26px;line-height:26px;text-align:center;color:#222">查询</div>
<div class="a" style="left:1131px;top:560px;width:84px;height:26px;border:1px solid #7e8ca4;background:linear-gradient(#ffffff,#f2f6fa 30%,#c3d5ea);"></div><div class="st" style="left:1131px;top:561px;width:84px;height:26px;line-height:26px;text-align:center;color:#222">查询所有</div>
<div class="a" style="left:604px;top:628px;width:746px;height:190px;border:1px solid #b6bcc2"></div>
<div class="st" style="left:607px;top:621px;padding:0 2px;background:#fff;color:#333;font-size:12px;letter-spacing:0.5px">新增人事变动</div>
<div class="st" style="left:618px;top:647px;color:#333">员工号:</div>
<div class="a" style="left:667px;top:645px;width:113px;height:19px;border:1px solid #7a7a7a;background:#fff;box-shadow:inset 1px 1px 0 #e8e8e8"></div>
<div class="st" style="left:618px;top:723px;color:#333">变动项目:</div>
<div class="a" style="left:680px;top:718px;width:53px;height:25px;border:1px solid #7e8ca4;background:linear-gradient(#f4f7fb,#e3e9f1)"></div><div class="a" style="left:713px;top:719px;width:19px;height:23px;border-left:1px solid #7e8ca4;background:linear-gradient(#f0f4f9,#c5d6ea)"></div><svg class="a" style="left:718.0px;top:727.5px" width="10" height="6"><path d="M0 0h10L5 6z" fill="#111"/></svg><div class="st" style="left:684px;top:718px;height:25px;line-height:25px;color:#222">职位</div>
<div class="a" style="left:743px;top:719px;width:21px;height:23px;background:#eeeeee"></div><div class="st" style="left:745px;top:719px;height:23px;line-height:23px;color:#222">=</div>
<div class="a" style="left:774px;top:721px;width:113px;height:19px;border:1px solid #7a7a7a;background:#fff;box-shadow:inset 1px 1px 0 #e8e8e8"></div>
<div class="a" style="left:898px;top:718px;width:59px;height:26px;border:1px solid #7e8ca4;background:linear-gradient(#ffffff,#f2f6fa 30%,#c3d5ea);"></div><div class="st" style="left:898px;top:719px;width:59px;height:26px;line-height:26px;text-align:center;color:#222">确认</div>
<div class="a" style="left:1280px;top:855px;width:147px;height:55px;background:#f0f0f0"></div><svg class="a" style="left:1291px;top:864px" width="38" height="34" viewBox="0 0 38 34"><path d="M31 7 A15 15 0 1 0 31 27" fill="none" stroke="#a9a9a9" stroke-width="4.2"/><path d="M9 10h7l4 6 11-8 5-1-12 11 6 8h-7l-4-5-5 5h-6l8-8z" fill="#a9a9a9"/></svg><div class="a" style="left:1333px;top:867px;font-size:21px;line-height:24px;color:#a6a6a6;font-weight:bold;white-space:nowrap">创新互联</div><div class="a" style="left:1333px;top:890px;font-size:5.5px;line-height:7px;color:#aaa;white-space:nowrap;letter-spacing:1.75px">CHUANG XIN HU LIAN</div>
</body></html>
